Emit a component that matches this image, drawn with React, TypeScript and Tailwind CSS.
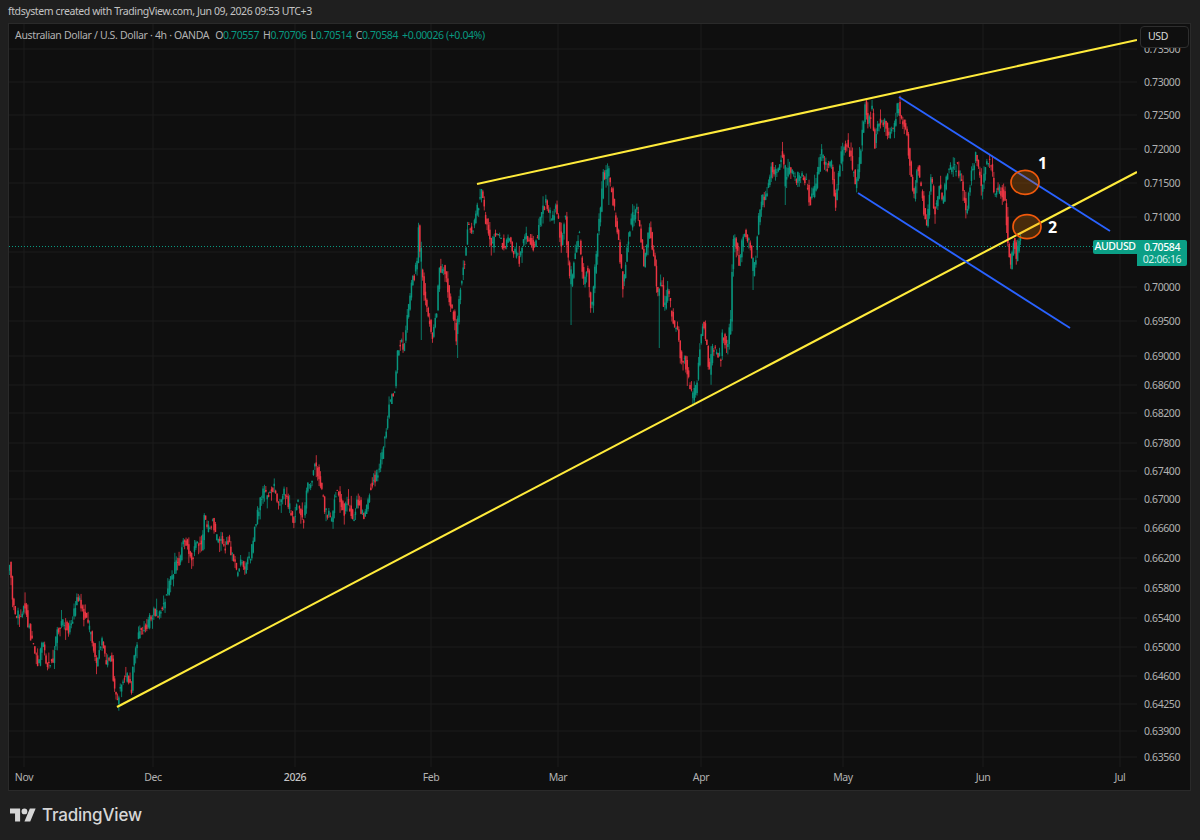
const path: [number, number][] = [
  [9,573],[11,563],[13,593],[16,617],[20,613],[26,607],[28,620],[33,643],[37,657],[39,667],[43,643],[48,667],[53,663],[58,630],[63,622],[70,630],[75,613],[78,593],[82,610],[87,620],[93,640],[97,663],[102,640],[107,663],[112,653],[115,687],[118,700],[123,680],[128,677],[132,690],[135,653],[140,633],[148,627],[153,613],[160,613],[167,597],[172,577],[177,563],[180,560],
  [185,540],[193,557],[197,540],[203,547],[205,517],[208,530],[213,520],[217,540],[222,537],[225,553],[228,537],[233,557],[238,573],[242,557],[246,570],[252,553],[255,530],[260,507],[263,493],[268,497],[275,487],[279,507],[285,493],[292,513],[295,523],[297,500],[305,520],[307,490],[312,480],[316,457],[318,470],[322,487],[325,507],[332,520],[335,500],[338,488],[345,513],[348,503],[355,520],[358,497],[365,520],[368,500],[373,483],[378,473],[382,460],[385,437],[388,423],[390,403],[395,393],
  [397,363],[400,343],[405,347],[408,313],[413,283],[418,263],[419,227],[422,267],[425,297],[430,323],[433,340],[437,317],[440,270],[445,267],[450,297],[455,320],[457,337],[460,297],[463,273],[466,257],[468,227],[473,233],[478,210],[482,190],[485,210],[488,230],[492,247],[497,230],[505,247],[508,237],[515,253],[520,260],[525,237],[530,237],[535,250],[542,217],[547,200],[552,220],[557,207],[562,243],[566,210],[568,253],[572,283],[577,247],[580,233],[584,283],[588,267],[592,310],[595,280],[598,237],[602,200],[604,177],[608,170],[612,190],[615,210],[618,233],[622,267],[624,288],[628,243],
  [633,217],[638,210],[642,240],[645,267],[650,223],[655,260],[658,297],[662,277],[665,313],[668,287],[673,317],[678,333],[682,360],[685,357],[690,383],[693,397],[697,387],[701,343],[704,320],[707,343],[710,377],[713,347],[718,353],[722,360],[723,333],[727,350],[732,320],[733,257],[735,233],[740,263],[745,230],[752,247],[753,277],[757,253],[759,220],[763,200],[768,190],[772,167],[778,173],[783,150],[786,183],[790,167],[797,180],[800,173],[807,183],[811,203],[817,183],[822,153],[827,167],[832,163],[836,210],[840,163],[843,153],[848,140],[853,167],[857,188],[863,133],
  [866,100],[868,123],[873,110],[875,147],[880,120],[885,120],[890,140],[895,123],[899,103],[903,120],[908,140],[911,167],[915,200],[918,163],[925,213],[928,223],[932,170],[935,213],[940,187],[944,203],[948,170],[958,167],[963,187],[967,217],[972,173],[977,153],[982,190],[987,160],[992,163],[995,193],[1000,187],[1005,197],[1007,217],[1009,250],[1011,267],[1015,237],[1017,260],[1020,237],
];

const prices: [string, number][] = [
  ["0.73500", 49],["0.73000", 82],["0.72500", 115],["0.72000", 149],["0.71500", 183],["0.71000", 217],["0.70500", 252],["0.70000", 287],["0.69500", 321],["0.69000", 356],["0.68600", 385],["0.68200", 413],["0.67800", 443],["0.67400", 471],["0.67000", 499],["0.66600", 528],["0.66200", 558],["0.65800", 588],["0.65400", 618],["0.65000", 647],["0.64600", 676],["0.64250", 704],["0.63900", 731],["0.63560", 757],
];

const months: [string, number][] = [
  ["Nov", 24],["Dec", 153],["2026", 295],["Feb", 431],["Mar", 558],["Apr", 701],["May", 843],["Jun", 983],["Jul", 1120],
];

// long lower wicks that stick out of the price path
const spikes: [number, number][] = [[570,325],[457,358],[659,348],[753,290],[785,205],[421,340],[608,205]];

function yAt(x: number) {
  for (let i = 1; i < path.length; i++) {
    if (x <= path[i][0]) {
      const [x0, y0] = path[i - 1];
      const [x1, y1] = path[i];
      return y0 + ((y1 - y0) * (x - x0)) / (x1 - x0);
    }
  }
  return path[path.length - 1][1];
}

let seed = 20260609;
function rnd() {
  seed = (seed + 0x6d2b79f5) | 0;
  let t = Math.imul(seed ^ (seed >>> 15), 1 | seed);
  t = (t + Math.imul(t ^ (t >>> 7), 61 | t)) ^ t;
  return ((t ^ (t >>> 14)) >>> 0) / 4294967296;
}

const step = 1.4;
const candles: { x: number; top: number; h: number; wt: number; wb: number; up: boolean }[] = [];
for (let x = 9; x <= 1020; x += step) {
  const a = yAt(x) + (rnd() - 0.5) * 11;
  const b = yAt(x + step) + (rnd() - 0.5) * 11;
  const top = Math.min(a, b);
  const bottom = Math.max(a, b);
  candles.push({
    x,
    top,
    h: Math.max(bottom - top, 1),
    wt: top - rnd() * rnd() * 12,
    wb: bottom + rnd() * rnd() * 12,
    up: b < a,
  });
}
for (const [sx, sy] of spikes) {
  const c = candles[Math.round((sx - 9) / step)];
  c.wb = Math.max(c.wb, sy);
  c.up = true;
}

function TvLogo() {
  return (
    <svg width="26" height="14" viewBox="0 4 36 18" fill="#d6d6d6">
      <path d="M14 22H7V11H0V4h14v18zM28 22h-8l7.5-18h8L28 22z" />
      <circle cx="20" cy="8" r="4" />
    </svg>
  );
}

function Chart() {
  return (
    <svg className="absolute inset-0 h-full w-full" viewBox="9 24 1128 743">
      {prices.map(([p, y]) => (
        <line key={p} x1="9" x2="1137" y1={y} y2={y} stroke="#1c1c1c" strokeWidth="1" />
      ))}
      {months.map(([m, x]) => (
        <line key={m} x1={x} x2={x} y1="24" y2="767" stroke="#1c1c1c" strokeWidth="1" />
      ))}
      <line x1="9" x2="1137" y1="246.5" y2="246.5" stroke="#089981" strokeWidth="1" strokeDasharray="1 2" />
      {candles.map((c, i) => (
        <g key={i} fill={c.up ? "#089981" : "#f23645"}>
          <rect x={c.x + 0.2} y={c.wt} width="0.9" height={c.wb - c.wt} opacity="0.85" />
          <rect x={c.x - 0.1} y={c.top} width="1.5" height={c.h} opacity="0.9" />
        </g>
      ))}
      <line x1="117" y1="707" x2="1137" y2="172" stroke="#ffeb3b" strokeWidth="2.1" />
      <line x1="477" y1="184" x2="1137" y2="40" stroke="#ffeb3b" strokeWidth="2.1" />
      <line x1="899" y1="97" x2="1110" y2="231" stroke="#2962ff" strokeWidth="1.9" />
      <line x1="858" y1="193" x2="1070" y2="328" stroke="#2962ff" strokeWidth="1.9" />
      <ellipse cx="1025" cy="182.3" rx="14" ry="12" fill="#f57c00" fillOpacity="0.25" stroke="#f0590c" strokeWidth="1.7" />
      <ellipse cx="1027" cy="226.7" rx="14" ry="12" fill="#f57c00" fillOpacity="0.25" stroke="#f0590c" strokeWidth="1.7" />
    </svg>
  );
}

export default function App() {
  return (
    <div
      className="flex h-[840px] w-[1200px] flex-col overflow-hidden bg-[#1f1f1f] text-[10.5px] tracking-[-0.4px] text-[#b2b2b2]"
      style={{ fontFamily: '"Noto Sans", "Liberation Sans", sans-serif' }}
    >
      <div className="flex h-[23px] items-center pl-2 text-[#c4c4c4]">
        ftdsystem created with TradingView.com, Jun 09, 2026 09:53 UTC+3
      </div>

      <div className="ml-2 mr-[9px] grid h-[768px] grid-cols-[1128px_1fr] grid-rows-[743px_1fr] border border-[#2a2a2a] bg-[#0f0f0f]">
        <div className="relative overflow-hidden">
          <Chart />
          <div className="absolute left-[6px] top-[4px] flex gap-[4px] text-[#b2b2b2]">
            <span className="mr-[2px] tracking-[-0.33px]">Australian Dollar / U.S. Dollar · 4h · OANDA</span>
            <span>O<span className="text-[#089981]">0.70557</span></span>
            <span>H<span className="text-[#089981]">0.70706</span></span>
            <span>L<span className="text-[#089981]">0.70514</span></span>
            <span>C<span className="text-[#089981]">0.70584</span></span>
            <span className="text-[#089981]">+0.00026 (+0.04%)</span>
          </div>
          <span className="absolute left-[1029px] top-[129px] text-[16px] font-bold leading-[20px] tracking-normal text-white">1</span>
          <span className="absolute left-[1039px] top-[193px] text-[16px] font-bold leading-[20px] tracking-normal text-white">2</span>
          <span className="absolute right-0 top-[216px] flex h-[14px] w-[44px] items-center justify-center rounded-l-[2px] bg-[#0b9f86] font-medium text-white">
            AUDUSD
          </span>
        </div>

        <div className="relative overflow-hidden">
          {prices.filter(([p]) => p !== "0.70500").map(([p, y]) => (
            <span
              key={p}
              className="absolute left-[7px] leading-[14px]"
              style={{ top: y - 24 - 7 }}
            >
              {p}
            </span>
          ))}
          <div className="absolute left-[3px] top-[2px] flex h-[22px] w-[49px] items-center rounded border border-[#2e2e2e] bg-[#0f0f0f] pl-[7px] text-[#d8d8d8]">
            USD
          </div>
          <div className="absolute left-0 top-[216px] flex h-[26px] w-[50px] flex-col items-center justify-center rounded-r-[2px] bg-[#0b9f86] leading-[12px] text-white">
            <span className="font-medium">0.70584</span>
            <span className="text-[#d4f0ea]">02:06:16</span>
          </div>
        </div>

        <div className="relative overflow-hidden">
          {months.map(([m, x]) => (
            <span
              key={m}
              className={m === "2026" ? "absolute top-[3px] -translate-x-1/2 font-medium text-[#c4c4c4]" : "absolute top-[3px] -translate-x-1/2"}
              style={{ left: x - 9 }}
            >
              {m}
            </span>
          ))}
        </div>
        <div />
      </div>

      <div className="flex flex-1 items-center gap-[6px] pb-[1px] pl-[10px]">
        <TvLogo />
        <span className="text-[17px] font-medium leading-none tracking-[-0.2px] text-[#d6d6d6]" style={{ fontFamily: 'Inter, "Noto Sans", sans-serif' }}>
          TradingView
        </span>
      </div>
    </div>
  );
}
